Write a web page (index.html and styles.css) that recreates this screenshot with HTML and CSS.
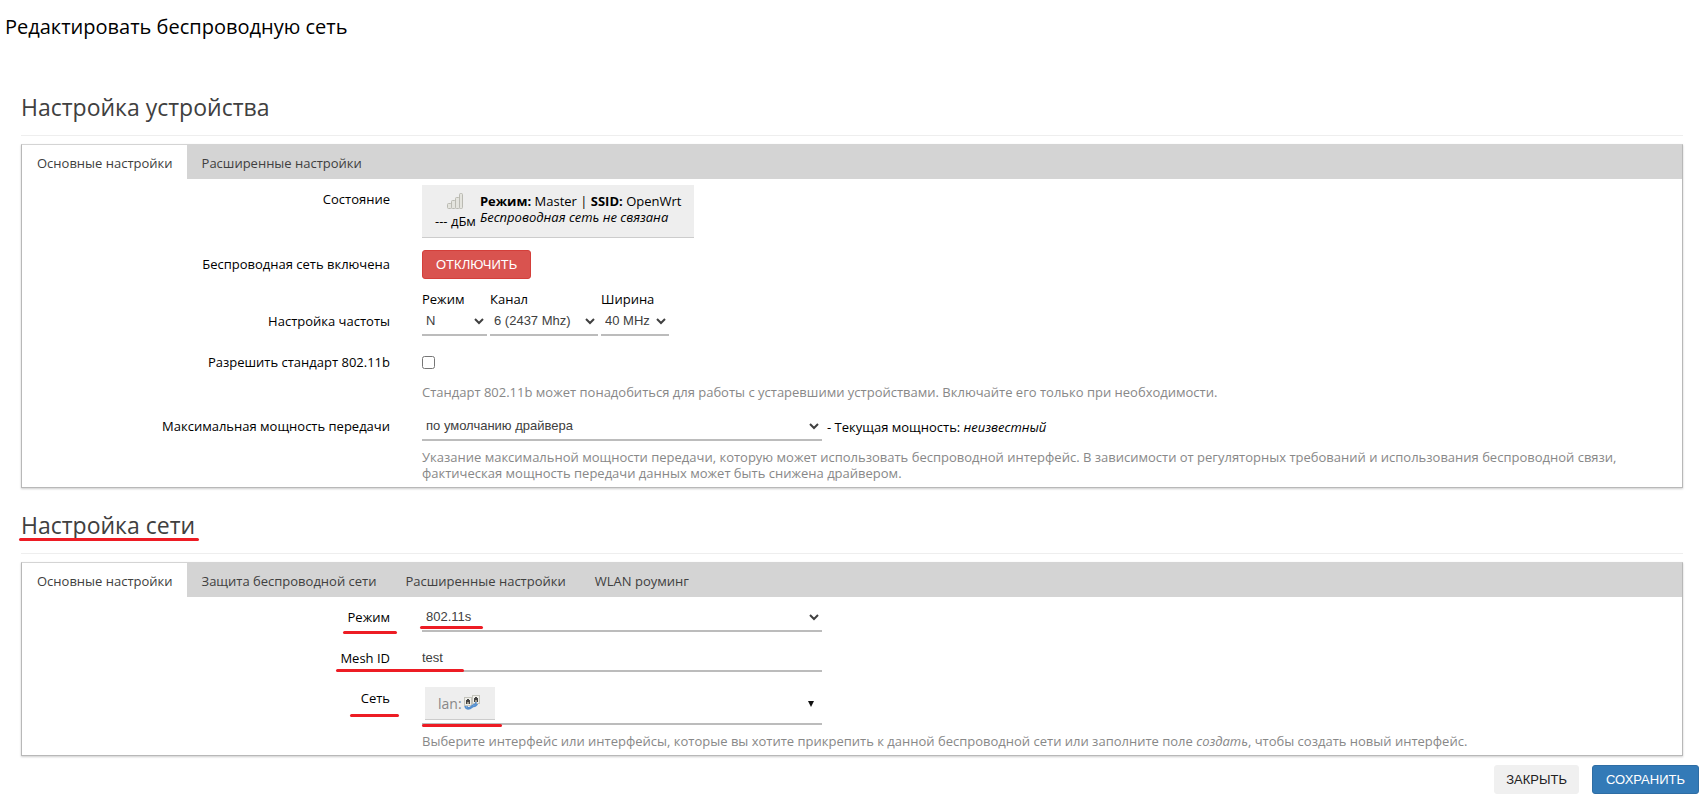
FILE: index.html
```html
<!DOCTYPE html>
<html lang="ru">
<head>
    <meta charset="UTF-8">
    <meta name="viewport" content="width=device-width, initial-scale=1.0">
    <title>Редактировать беспроводную сеть</title>
    <link rel="stylesheet" href="styles.css">
</head>
<body>
    <h1>Редактировать беспроводную сеть</h1>
    <main>
        <section>
            <h2>Настройка устройства</h2>
            <div class="card">
                <nav class="tabs">
                    <a href="#" class="active">Основные настройки</a>
                    <a href="#">Расширенные настройки</a>
                </nav>
                <div class="row">
                    <div class="label">Состояние</div>
                    <div class="field">
                        <div class="status">
                            <div class="signal">
                                <svg width="16" height="16" viewBox="0 0 16 16" fill="#e4e4de" stroke="#babab2">
                                    <rect x="0.5" y="10.5" width="4" height="5" rx="1"/>
                                    <rect x="4.5" y="7.5" width="4" height="8" rx="1"/>
                                    <rect x="8.5" y="4.5" width="4" height="11" rx="1"/>
                                    <rect x="12.5" y="0.5" width="3" height="15" rx="1"/>
                                </svg>
                                <span>--- дБм</span>
                            </div>
                            <div class="status-text">
                                <b>Режим:</b> Master | <b>SSID:</b> OpenWrt<br>
                                <em>Беспроводная сеть не связана</em>
                            </div>
                        </div>
                    </div>
                </div>
                <div class="row">
                    <div class="label">Беспроводная сеть включена</div>
                    <div class="field">
                        <button type="button" class="btn negative">Отключить</button>
                    </div>
                </div>
                <div class="row">
                    <div class="label label-low">Настройка частоты</div>
                    <div class="field freq">
                        <div class="freq-item band">
                            <label for="band">Режим</label>
                            <select id="band"><option>N</option></select>
                        </div>
                        <div class="freq-item channel">
                            <label for="channel">Канал</label>
                            <select id="channel"><option>6 (2437 Mhz)</option></select>
                        </div>
                        <div class="freq-item htmode">
                            <label for="htmode">Ширина</label>
                            <select id="htmode"><option>40 MHz</option></select>
                        </div>
                    </div>
                </div>
                <div class="row">
                    <label class="label" for="legacy">Разрешить стандарт 802.11b</label>
                    <div class="field">
                        <div class="check"><input type="checkbox" id="legacy"></div>
                        <p class="hint">Стандарт 802.11b может понадобиться для работы с устаревшими устройствами. Включайте его только при необходимости.</p>
                    </div>
                </div>
                <div class="row">
                    <label class="label" for="power">Максимальная мощность передачи</label>
                    <div class="field">
                        <div class="power">
                            <select id="power" class="wide"><option>по умолчанию драйвера</option></select>
                            <span>- Текущая мощность: <em>неизвестный</em></span>
                        </div>
                        <p class="hint">Указание максимальной мощности передачи, которую может использовать беспроводной интерфейс. В зависимости от регуляторных требований и использования беспроводной связи, фактическая мощность передачи данных может быть снижена драйвером.</p>
                    </div>
                </div>
            </div>
        </section>

        <section>
            <h2><span class="mark mark-title">Настройка сети</span></h2>
            <div class="card">
                <nav class="tabs">
                    <a href="#" class="active">Основные настройки</a>
                    <a href="#">Защита беспроводной сети</a>
                    <a href="#">Расширенные настройки</a>
                    <a href="#">WLAN роуминг</a>
                </nav>
                <div class="row">
                    <label class="label" for="mode"><span class="mark mark-label">Режим</span></label>
                    <div class="field">
                        <div class="mark mark-mode wide">
                            <select id="mode" class="wide"><option>802.11s</option></select>
                        </div>
                    </div>
                </div>
                <div class="row">
                    <label class="label" for="meshid"><span class="mark mark-mesh">Mesh ID</span></label>
                    <div class="field">
                        <input type="text" id="meshid" class="wide" value="test">
                    </div>
                </div>
                <div class="row">
                    <label class="label" for="network"><span class="mark mark-net">Сеть</span></label>
                    <div class="field">
                        <div class="mark mark-lan wide">
                            <button type="button" id="network" class="dropdown wide">
                                <span class="chip">lan:
                                    <svg width="16" height="16" viewBox="0 0 16 16">
                                        <path d="M1 11q1 4 5 2.500l3-2q4-.5 4.500-3.500" fill="none" stroke="#5590d0" stroke-width="1.600"/>
                                        <rect x="0.500" y="2.500" width="7" height="8" fill="#efefea" stroke="#c4c4bc"/>
                                        <rect x="8.500" y="0.500" width="7" height="8" fill="#efefea" stroke="#c4c4bc"/>
                                        <path d="M2 5h1V4h2v1h1v4H2zM10 3h1V2h2v1h1v4h-4z" fill="#444"/>
                                        <path d="M3 7h2v2H3zM11 5h2v2h-2z" fill="#a09c8e"/>
                                        <path d="M3 11q0 2.500 3 1.500l3-2.500q3 0 3-3" fill="none" stroke="#5590d0" stroke-width="1.500"/>
                                    </svg>
                                </span>
                                <svg class="arrow" width="6" height="6" viewBox="0 0 6 6"><path d="M0 0h6L3 6z" fill="#111"/></svg>
                            </button>
                        </div>
                        <p class="hint">Выберите интерфейс или интерфейсы, которые вы хотите прикрепить к данной беспроводной сети или заполните поле <em>создать</em>, чтобы создать новый интерфейс.</p>
                    </div>
                </div>
            </div>
        </section>
    </main>
    <footer>
        <button type="button" class="btn">Закрыть</button>
        <button type="button" class="btn positive">Сохранить</button>
    </footer>
</body>
</html>
```

FILE: styles.css
```css
* {
    box-sizing: border-box;
}

body {
    font-family: "Open Sans", "Noto Sans", sans-serif;
    font-size: 13px;
    line-height: 16px;
    background-color: #fff;
    color: #000;
    margin: 0;
}

h1 {
    font-size: 20px;
    font-weight: normal;
    line-height: 28px;
    margin: 0;
    padding: 13px 5px 29px;
}

main {
    padding: 0 23px 0 21px;
}

h2 {
    color: #404040;
    font-size: 23px;
    font-weight: normal;
    line-height: 36px;
    margin: 0 0 8px;
    padding: 19px 0 10px;
    border-bottom: 1px solid #eee;
}

.card {
    border: 1px solid #b8b8b8;
    border-top-color: #d4d4d4;
    box-shadow: 0 1px 2px rgba(0, 0, 0, 0.2);
}

.tabs {
    display: flex;
    background-color: #d4d4d4;
}

.tabs a {
    color: #404040;
    text-decoration: none;
    line-height: 36px;
    height: 34px;
    padding: 0 14px 0 15px;
}

.tabs .active {
    background-color: #fff;
}

/* form rows */
.row {
    display: flex;
    gap: 32px;
    padding: 6px 0;
}

.label {
    flex: 0 0 368px;
    line-height: 29px;
    height: 28px;
    text-align: right;
}

.label-low {
    margin-top: 16px;
}

.field {
    flex: 1;
    padding-right: 24px;
}

.hint {
    color: #888;
    margin: 8px 0 0;
}

select,
input[type="text"] {
    display: block;
    width: 100%;
    height: 29px;
    font-family: "Liberation Sans", Arial, sans-serif;
    font-size: 13px;
    color: #404040;
    background-color: transparent;
    border: none;
    border-bottom: 2px solid #bcbcbc;
    border-radius: 0;
    padding: 0;
}

input[type="text"] {
    height: 28px;
}

.field .wide {
    width: 400px;
}

.status {
    display: inline-flex;
    gap: 4px;
    height: 53px;
    padding: 8px 13px;
    background-color: #eee;
    border-bottom: 1px solid #ccc;
    vertical-align: top;
}

.signal {
    display: flex;
    flex-direction: column;
    align-items: center;
    line-height: 24px;
}

.signal svg {
    flex-shrink: 0;
}

.freq {
    display: flex;
    gap: 3px;
}

.freq-item label {
    display: block;
}

.band {
    width: 65px;
}

.channel {
    width: 108px;
}

.htmode {
    width: 68px;
}

.check {
    display: flex;
    align-items: center;
    height: 28px;
}

.check input {
    margin: 0;
}

.power {
    display: flex;
    gap: 5px;
    line-height: 30px;
    height: 29px;
}

.dropdown {
    display: flex;
    align-items: center;
    justify-content: space-between;
    height: 41px;
    background: none;
    border: none;
    border-bottom: 2px solid #bcbcbc;
    padding: 0 8px 0 3px;
}

.chip {
    display: flex;
    align-items: center;
    gap: 2px;
    height: 33px;
    font: 14px "Open Sans", "Noto Sans", sans-serif;
    color: #888;
    background-color: #eee;
    border-bottom: 1px solid #ccc;
    padding: 0 15px 0 13px;
}

.btn {
    font-family: "Liberation Sans", Arial, sans-serif;
    font-size: 13px;
    height: 29px;
    color: #222;
    text-transform: uppercase;
    background-color: #f0f0f0;
    border: 1px solid #f0f0f0;
    border-radius: 3px;
    padding: 0 11px;
    display: block;
}

.negative {
    color: #fff;
    background-color: #d9534f;
    border-color: #d43f3a;
    padding: 0 13px;
}

.positive {
    color: #fff;
    background-color: #337ab7;
    border-color: #2e6da4;
    padding: 0 13px;
}

footer {
    display: flex;
    justify-content: flex-end;
    gap: 13px;
    padding: 9px 7px 12px;
}

/* red marker strokes */
.mark {
    position: relative;
}

.mark::after {
    content: "";
    position: absolute;
    height: 3px;
    border-radius: 2px;
    background-color: #ed1c24;
}

.mark-title::after {
    left: -2px;
    right: -4px;
    bottom: 0;
}

.mark-label::after {
    left: -5px;
    right: -7px;
    bottom: -8px;
}

.mark-mode::after {
    left: -2px;
    width: 63px;
    bottom: 3px;
}

.mark-mesh::after {
    left: -4px;
    right: -74px;
    bottom: -5px;
}

.mark-net::after {
    left: -11px;
    right: -9px;
    bottom: -10px;
}

.mark-lan::after {
    left: 0;
    width: 80px;
    bottom: -2px;
}
```
